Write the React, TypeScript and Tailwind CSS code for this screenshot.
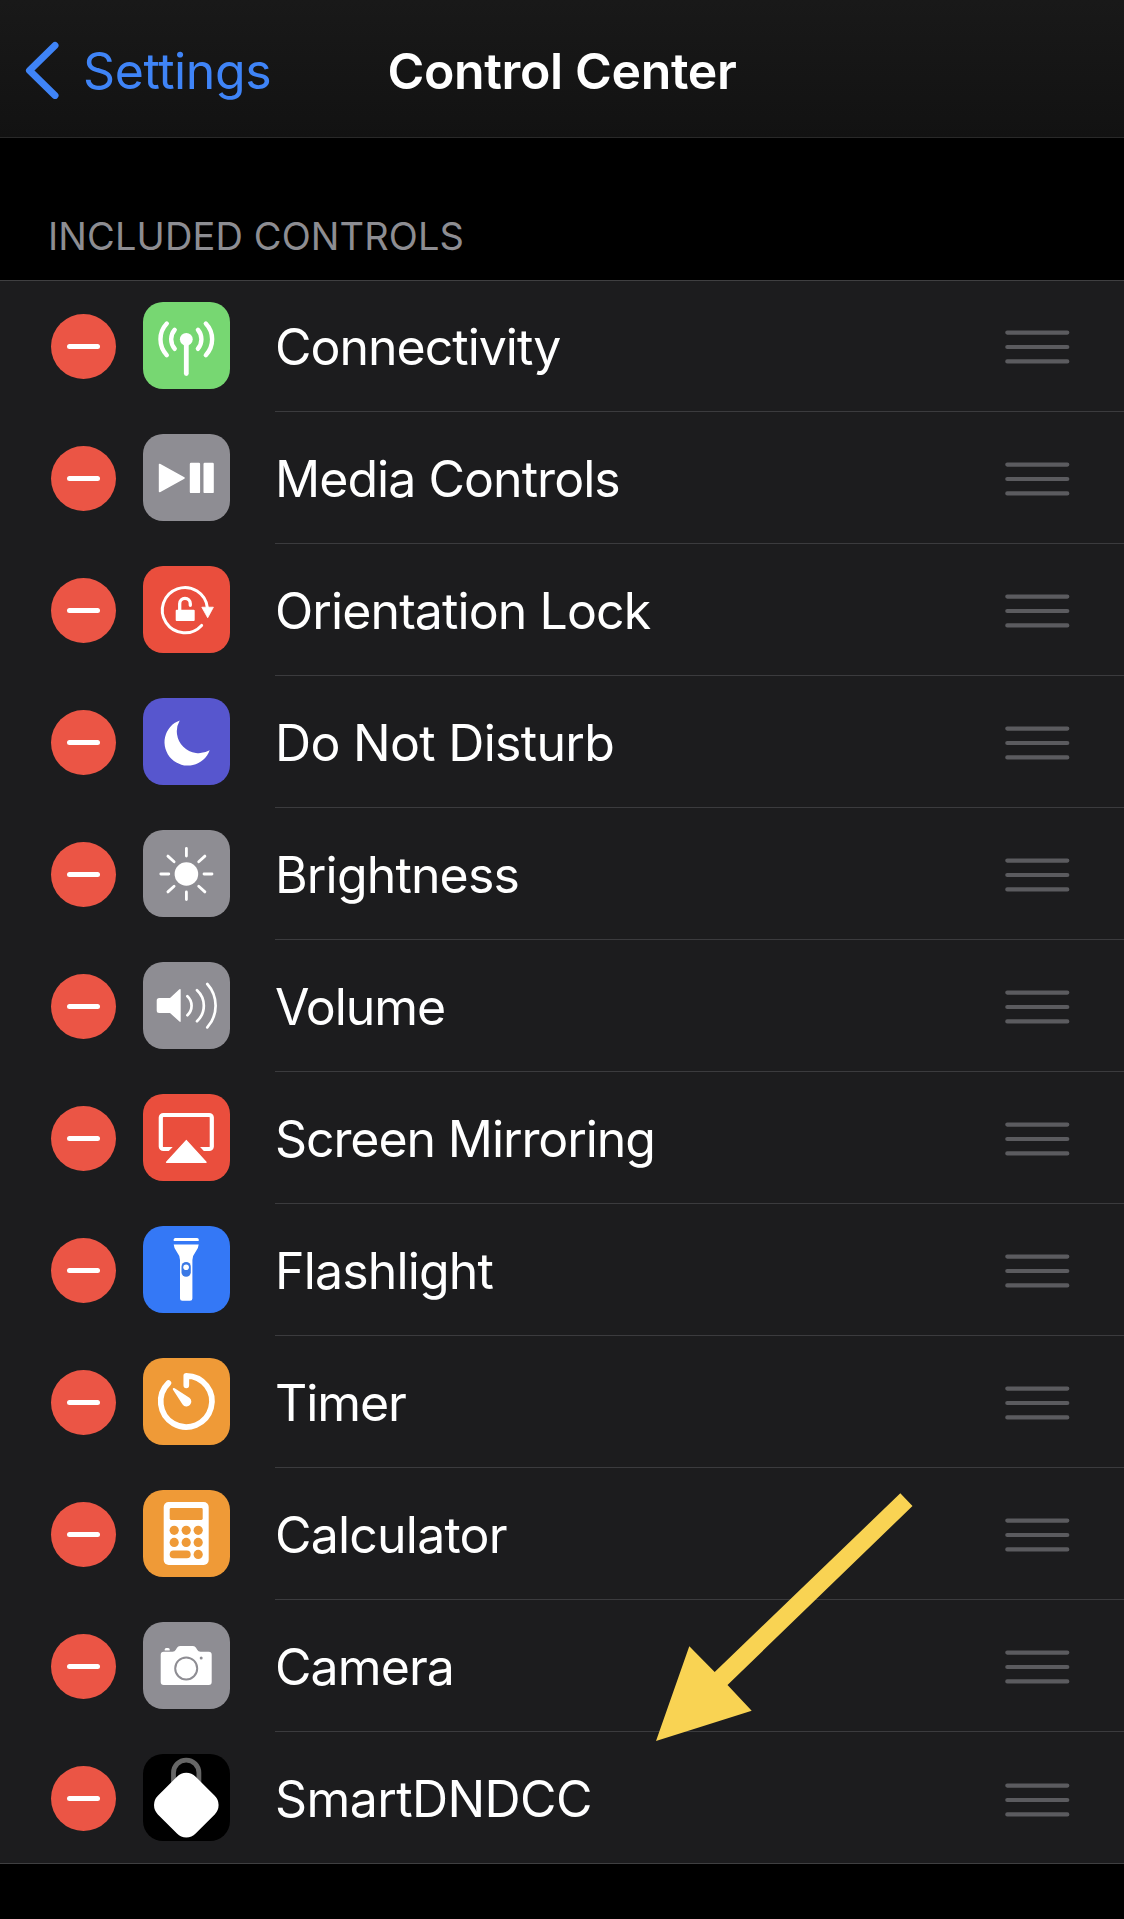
import type { ReactNode } from "react"

interface Control {
  name: string
  color: string
  tracking: string
  icon: ReactNode
}

const line = { fill: "none", stroke: "#fff", strokeLinecap: "round", strokeLinejoin: "round" } as const

const controls: Control[] = [
  {
    name: "Connectivity",
    color: "bg-[#77d772]",
    tracking: "tracking-[-1px]",
    icon: (
      <>
        <circle cx="43.3" cy="37.3" r="6.4" />
        <path d="M43.3 37.3V71.6" {...line} strokeWidth="4.8" />
        <path
          d="M31.7 27.8A14.6 14.6 0 0 0 31.7 46.8M54.9 27.8A14.6 14.6 0 0 1 54.9 46.8M23.8 21.5A23 23 0 0 0 23.8 53.2M62.8 21.5A23 23 0 0 1 62.8 53.2"
          {...line}
          strokeWidth="4.4"
        />
      </>
    ),
  },
  {
    name: "Media Controls",
    color: "bg-[#8e8d93]",
    tracking: "tracking-[-0.95px]",
    icon: (
      <>
        <path d="M16.6 30.5V57.5L41 44Z" stroke="#fff" strokeWidth="1.6" strokeLinejoin="round" />
        <rect x="46.8" y="28.8" width="10.3" height="30.3" rx="1.2" />
        <rect x="60.5" y="28.8" width="10.3" height="30.3" rx="1.2" />
      </>
    ),
  },
  {
    name: "Orientation Lock",
    color: "bg-[#ea4e3d]",
    tracking: "tracking-[-0.9px]",
    icon: (
      <>
        <path d="M64.4 42A22.6 22.6 0 1 0 58.6 59.4" {...line} strokeWidth="3" />
        <path d="M58.8 41.2H70.4L64.7 51.8Z" stroke="#fff" strokeWidth="0.8" strokeLinejoin="round" />
        <rect x="32.7" y="43.7" width="19" height="11.4" rx="1" />
        <path d="M36.7 45V37.7A5.3 5.3 0 0 1 47.3 37.7V39.3" {...line} strokeWidth="3.3" />
      </>
    ),
  },
  {
    name: "Do Not Disturb",
    color: "bg-[#5756ce]",
    tracking: "tracking-[-0.7px]",
    icon: <path d="M36.7 22.4A23.3 23.3 0 1 0 66.7 52.2A21.9 21.9 0 0 1 36.7 22.4Z" />,
  },
  {
    name: "Brightness",
    color: "bg-[#8e8d93]",
    tracking: "tracking-[-0.85px]",
    icon: (
      <>
        <circle cx="43.4" cy="44" r="11.8" />
        <path
          d="M43.4 18.5V26M43.4 62V69.5M17.8 44H25.8M61 44H69M24.9 26.1L31.1 31.8M61.9 26.1L55.7 31.8M24.9 61.9L31.1 56.2M61.9 61.9L55.7 56.2"
          {...line}
          strokeWidth="2.8"
        />
      </>
    ),
  },
  {
    name: "Volume",
    color: "bg-[#8e8d93]",
    tracking: "tracking-[-1.1px]",
    icon: (
      <>
        <path d="M16.2 36H27L36.4 27.3Q37.7 26.4 37.7 28V59Q37.7 60.6 36.4 59.6L27 50.9H16.2Q13.7 50.9 13.7 48.4V38.5Q13.7 36 16.2 36Z" />
        <path
          d="M44.4 34.2A12.9 12.9 0 0 1 44.4 53.2M54 28.2A21 21 0 0 1 54 59.2M64.3 22A32.5 32.5 0 0 1 64.3 65.4"
          {...line}
          strokeWidth="2.7"
        />
      </>
    ),
  },
  {
    name: "Screen Mirroring",
    color: "bg-[#ea4e3d]",
    tracking: "tracking-[-1.1px]",
    icon: (
      <>
        <rect x="17.8" y="21" width="51" height="34" rx="2.6" {...line} strokeWidth="4.2" />
        <path d="M30.2 52.5H56.6L61.8 58H24.8Z" fill="#ea4e3d" />
        <path d="M43.3 46.6L63 68.3H23.6Z" stroke="#fff" strokeWidth="1.4" strokeLinejoin="round" />
      </>
    ),
  },
  {
    name: "Flashlight",
    color: "bg-[#3478f6]",
    tracking: "tracking-[-0.85px]",
    icon: (
      <>
        <path d="M30.7 15V13.6Q30.7 12 32.3 12H54.1Q55.7 12 55.7 13.6V15Z" />
        <path d="M30.7 18.6H55.7Q55.5 22 52.8 25.6Q49.4 30 49.4 34V72.5Q49.4 74.8 47 74.8H39.3Q37 74.8 37 72.5V34Q37 30 33.6 25.6Q30.9 22 30.7 18.6Z" />
        <rect x="38.5" y="36" width="9.3" height="14.8" rx="4.65" fill="#3b79e6" />
        <circle cx="43.1" cy="41.3" r="2.8" />
      </>
    ),
  },
  {
    name: "Timer",
    color: "bg-[#ef9a37]",
    tracking: "tracking-[-1.1px]",
    icon: (
      <>
        <path d="M43.3 27.3V17.8A25.6 25.6 0 1 1 25.4 25.1" {...line} strokeWidth="5.7" />
        <path d="M30 30.2Q30.8 29.6 31.7 30.3L46.4 39.8A4.8 4.8 0 1 1 39.6 46.4L30 31.8Q29.5 30.8 30 30.2Z" />
      </>
    ),
  },
  {
    name: "Calculator",
    color: "bg-[#ef9a37]",
    tracking: "tracking-[-0.8px]",
    icon: (
      <>
        <rect x="20.7" y="12" width="45" height="63" rx="5" />
        <g fill="#ef9a37">
          <rect x="26.7" y="18" width="33" height="12" rx="1.4" />
          {[31.2, 43.2, 55.2].map((x) => (
            <g key={x}>
              <circle cx={x} cy="40.3" r="4.6" />
              <circle cx={x} cy="52.4" r="4.6" />
            </g>
          ))}
          <rect x="26.7" y="60.6" width="21" height="7.6" rx="3.8" />
          <circle cx="55.2" cy="64.4" r="4.6" />
        </g>
      </>
    ),
  },
  {
    name: "Camera",
    color: "bg-[#8e8d93]",
    tracking: "tracking-[-0.9px]",
    icon: (
      <>
        <path d="M20.7 29.8H29.5Q31.7 29.6 32.8 27.8L34 25.7Q35 24 37 24H50Q52 24 53 25.7L54.2 27.8Q55.3 29.6 57.5 29.8H65.7Q68.7 29.8 68.7 32.8V60Q68.7 63 65.7 63H20.7Q17.7 63 17.7 60V32.8Q17.7 29.8 20.7 29.8Z" />
        <path d="M21.7 28.6V27.5Q21.7 26 23.2 26H25.2Q26.7 26 26.7 27.5V28.6Z" />
        <circle cx="43.2" cy="46.4" r="11" fill="none" stroke="#8e8d93" strokeWidth="2" />
        <circle cx="58.2" cy="36" r="1.5" fill="#8e8d93" />
      </>
    ),
  },
  {
    name: "SmartDNDCC",
    color: "bg-black",
    tracking: "tracking-[-0.6px]",
    icon: (
      <>
        <path d="M30.5 30V18.8A12.7 12.7 0 0 1 55.9 18.8V30" fill="none" stroke="#666" strokeWidth="4.8" />
        <rect x="16.6" y="24.4" width="53.4" height="53.4" rx="13.2" transform="rotate(45 43.3 51.1)" />
      </>
    ),
  },
]

function ControlRow({ control, last }: { control: Control; last: boolean }) {
  return (
    <li className="flex h-[132px] pl-[51px]">
      <button className="mt-[34px] flex size-[65px] items-center justify-center rounded-full bg-[#eb5545]" aria-label="Remove">
        <span className="h-[5px] w-[33px] rounded-full bg-white" />
      </button>
      <div className={`mt-[22px] ml-[27px] size-[87px] overflow-hidden rounded-[20px] ${control.color}`}>
        <svg viewBox="0 0 87 87" className="size-full" fill="#fff">
          {control.icon}
        </svg>
      </div>
      <div className={`ml-[45px] flex flex-1 items-center justify-between pr-[54px] ${last ? "" : "border-b border-[#3b3b3e]"}`}>
        <span className={`pt-[2px] text-[50px] leading-[60px] whitespace-nowrap text-white ${control.tracking}`}>{control.name}</span>
        <svg viewBox="0 0 65 34" className="mt-[3px] h-[34px] w-[65px]" stroke="#5b5b5f" strokeWidth="4.2" strokeLinecap="round">
          <path d="M2.3 2.6H62.3M2.3 17H62.3M2.3 31.4H62.3" />
        </svg>
      </div>
    </li>
  )
}

export default function App() {
  return (
    <div className="relative h-[1919px] w-[1124px] overflow-hidden bg-black font-['Inter',sans-serif]">
      <header className="grid h-[138px] grid-cols-3 items-center border-b border-[#292929] bg-linear-to-b from-[#191919] to-[#121212]">
        <a className="flex items-center pt-[2px] pl-[25px] text-[#3f84f7]">
          <svg viewBox="0 0 34 58" className="h-[58px] w-[34px]" fill="none" stroke="currentColor" strokeWidth="7" strokeLinecap="round" strokeLinejoin="round">
            <path d="M30 4.5L4.5 29.5L30 54.5" />
          </svg>
          <span className="pt-[2px] pl-[24px] text-[50px] leading-[60px] tracking-[-0.4px]">Settings</span>
        </a>
        <h1 className="pt-[4px] text-center text-[50px] leading-[60px] font-semibold tracking-[-0.35px] whitespace-nowrap text-white">Control Center</h1>
      </header>

      <h2 className="h-[142px] pt-[75px] pl-[48px] text-[38px] leading-[46px] tracking-[0.12px] text-[#8d8d92]">INCLUDED CONTROLS</h2>

      <ul className="bg-[#1c1c1e] shadow-[inset_0_1px_0_#3f3f41,inset_0_-1px_0_#3f3f41]">
        {controls.map((control, i) => (
          <ControlRow key={control.name} control={control} last={i === controls.length - 1} />
        ))}
      </ul>

      {/* Arrow pointing at the last control */}
      <svg viewBox="0 0 257 248" className="absolute top-[1493px] left-[656px] h-[248px] w-[257px]" fill="#f9d353">
        <path d="M244.3 0.3L256.5 13L71.5 192L95.7 217.7L0 248L33.3 153.3L58.7 179Z" />
      </svg>
    </div>
  )
}
